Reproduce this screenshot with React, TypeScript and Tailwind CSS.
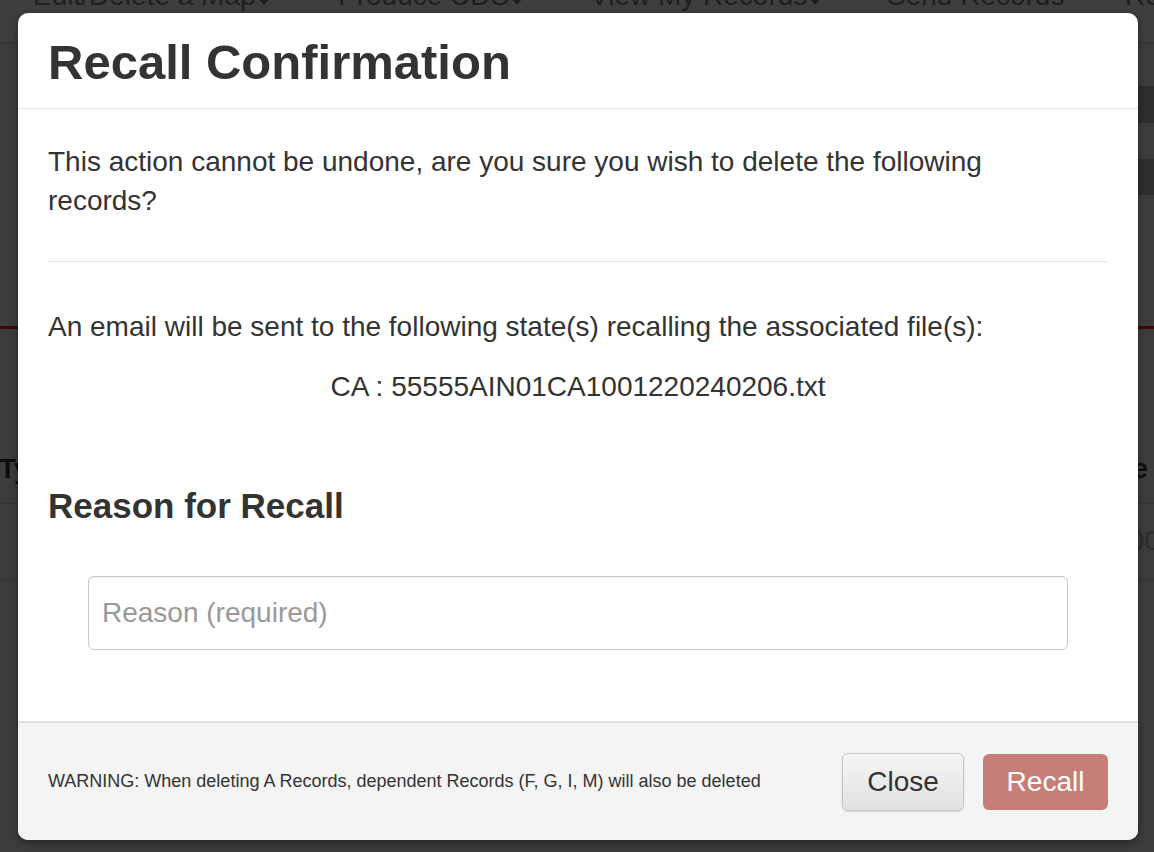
import React from "react"

function Caret() {
  return (
    <svg width="10" height="7" viewBox="0 0 10 7" className="block">
      <path d="M0 0 L10 0 L5 6 Z" fill="#1e1e1e" />
    </svg>
  )
}

function NavItem({ label, width, caret }: { label: string; width: string; caret?: boolean }) {
  return (
    <div className={`${width} shrink-0 flex items-end whitespace-nowrap`}>
      <span>{label}</span>
      {caret && (
        <span className="mb-[6px] ml-[3px] flex">
          <Caret />
        </span>
      )}
    </div>
  )
}

export default function App() {
  return (
    <div className="relative h-[852px] w-[1154px] overflow-hidden bg-[#3c3c3c] font-['Liberation_Sans',Arial,sans-serif]">
      {/* dimmed page behind the modal */}
      <div className="flex h-[43px] items-start border-b border-[#343434] bg-[#3e3e3e] pl-[33px] text-[28px] text-[#1e1e1e]">
        <div className="-mt-[20px] flex leading-[32px]">
          <NavItem label="Edit/Delete a Map" width="w-[305px]" caret />
          <NavItem label="Produce UDS" width="w-[252px]" caret />
          <NavItem label="View My Records" width="w-[297px]" caret />
          <NavItem label="Send Records" width="w-[238px]" />
          <NavItem label="Records" width="w-[200px]" />
        </div>
      </div>

      <div className="ml-auto mt-[43px] h-[37px] w-[300px] bg-[#2d2d2d]" />
      <div className="ml-auto mt-[36px] h-[36px] w-[300px] bg-[#2d2d2d]" />
      <div className="mt-[131px] h-[3px] w-full bg-[#3e0707]" />

      <div className="mt-[124px] flex justify-between border-b border-[#333333] pb-[18px] pr-[6px] text-[28px] font-bold leading-[32px] text-[#0e0e0e]">
        <span className="-ml-[1px]">Type</span>
        <span>Date</span>
      </div>
      <div className="flex justify-end border-b border-[#333333] pb-[22px] pt-[21px] text-[28px] leading-[32px] text-[#2c2c2c]">
        <span className="-mr-[6px]">10:00</span>
      </div>

      {/* modal */}
      <div className="absolute left-[18px] top-[13px] w-[1120px] overflow-hidden rounded-[10px] bg-white text-[#333333] shadow-[0_3px_9px_rgba(0,0,0,0.4)]">
        <div className="border-b border-[#e5e5e5] px-[30px] pb-[19px] pt-[22px]">
          <h1 className="text-[49px] font-bold leading-[54px]">Recall Confirmation</h1>
        </div>

        <div className="px-[30px] pb-[71px] pt-[33px]">
          <p className="text-[28px] leading-[39px]">
            This action cannot be undone, are you sure you wish to delete the following
            <br />
            records?
          </p>
          <div className="mt-[41px] border-t border-[#e5e5e5]" />
          <p className="mt-[45px] text-[28px] leading-[39px]">
            An email will be sent to the following state(s) recalling the associated file(s):
          </p>
          <p className="mt-[21px] text-center text-[28px] leading-[39px]">CA : 55555AIN01CA1001220240206.txt</p>

          <h2 className="mt-[81px] text-[35px] font-bold leading-[38px]">Reason for Recall</h2>

          <div className="mx-[40px] mt-[51px]">
            <input
              type="text"
              placeholder="Reason (required)"
              className="h-[74px] w-full rounded-[6px] border border-[#c8c8c8] px-[13px] text-[28px] text-[#555555] shadow-[inset_0_1px_1px_rgba(0,0,0,0.075)] outline-none placeholder:text-[#999999]"
            />
          </div>
        </div>

        <div className="flex h-[119px] items-center justify-between border-t-2 border-[#e0e0e0] bg-[#f4f4f4] px-[30px]">
          <span className="text-[18px] text-[#333333]">
            WARNING: When deleting A Records, dependent Records (F, G, I, M) will also be deleted
          </span>
          <div className="flex items-center gap-[19px]">
            <button className="h-[58px] w-[122px] rounded-[6px] border border-[#c4c4c4] bg-linear-to-b from-[#f5f5f5] to-[#e2e2e2] text-[28px] text-[#333333] shadow-[0_1px_2px_rgba(0,0,0,0.12)]">
              Close
            </button>
            <button className="h-[56px] w-[125px] rounded-[6px] bg-[#c67e78] text-[28px] text-white">
              Recall
            </button>
          </div>
        </div>
      </div>
    </div>
  )
}
